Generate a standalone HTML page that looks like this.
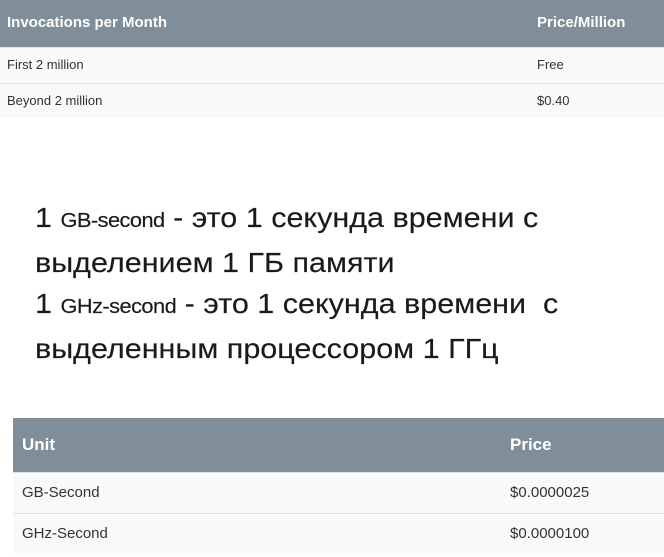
<!DOCTYPE html>
<html><head><meta charset="utf-8"><style>
body{margin:0;width:664px;height:557px;background:#fff;font-family:"Liberation Sans",sans-serif;position:relative;overflow:hidden}
.t{position:absolute;background:#f8f9fa;font-size:13px;color:#333}
.h{background:#7f8e98;color:#fff;font-weight:bold;position:relative}
.r{position:relative;border-top:1px solid #dfe2e5}
.c{position:absolute;white-space:nowrap}
.txt{position:absolute;left:35px;font-size:28px;color:#1a1a1a;white-space:nowrap;line-height:41px;transform:scaleX(1.09);transform-origin:left;-webkit-text-stroke:0.15px #1a1a1a}
.s{font-size:20px;letter-spacing:-0.5px}
</style></head><body>
<div class="t" style="left:0;top:0;width:664px;height:118px">
<div class="h" style="height:47px;font-size:15px"><span class="c" style="left:7px;top:14px">Invocations per Month</span><span class="c" style="left:537px;top:14px">Price/Million</span></div>
<div class="r" style="height:35px"><span class="c" style="left:7px;top:9px">First 2 million</span><span class="c" style="left:537px;top:9px">Free</span></div>
<div class="r" style="height:35px"><span class="c" style="left:7px;top:9px">Beyond 2 million</span><span class="c" style="left:537px;top:9px">$0.40</span></div>
</div>
<div class="txt" style="top:197px">1 <span class="s">GB-second</span> - это 1 секунда времени с<br>выделением 1 ГБ памяти<br>1 <span class="s">GHz-second</span> - это 1 секунда времени &nbsp;с<br>выделенным процессором 1 ГГц</div>
<div class="t" style="left:13px;top:418px;width:651px;height:135px;font-size:15px">
<div class="h" style="height:54px;font-size:17px"><span class="c" style="left:9px;top:17px">Unit</span><span class="c" style="left:497px;top:17px">Price</span></div>
<div class="r" style="height:40px"><span class="c" style="left:9px;top:11px">GB-Second</span><span class="c" style="left:497px;top:11px">$0.0000025</span></div>
<div class="r" style="height:40px"><span class="c" style="left:9px;top:11px">GHz-Second</span><span class="c" style="left:497px;top:11px">$0.0000100</span></div>
</div>
</body></html>
